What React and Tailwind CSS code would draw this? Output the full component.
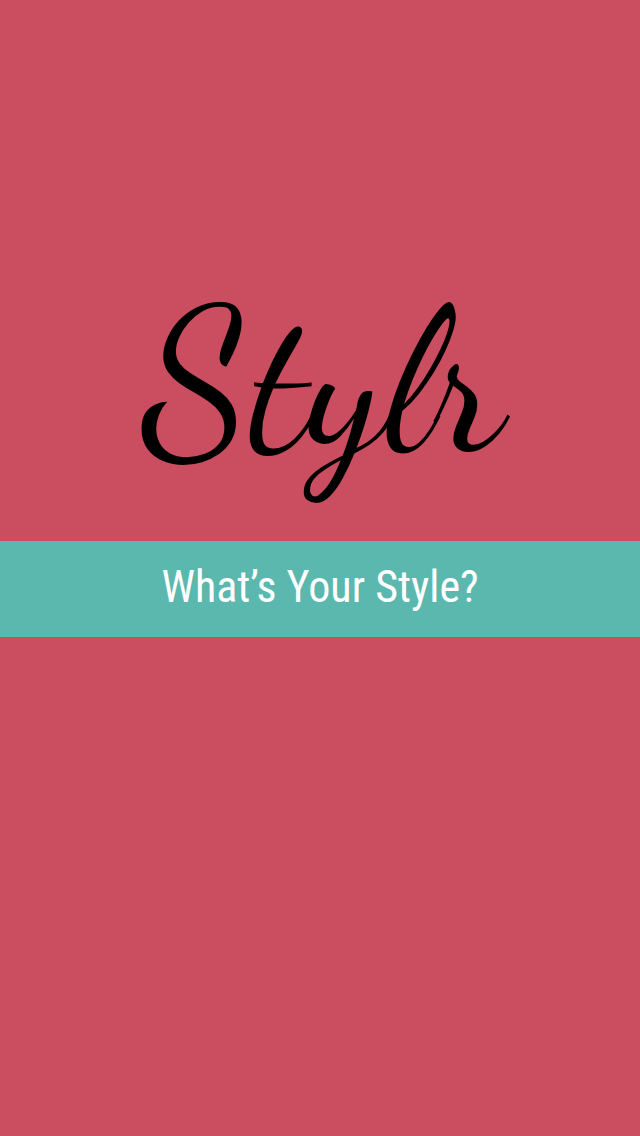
export default function App() {
  return (
    <main className="flex min-h-screen flex-col bg-[#ca4e5f]">
      <header className="flex justify-center pt-[283px] pb-[58px] pl-1.5">
        <h1 className="font-['Dancing_Script',cursive] text-[201px] leading-[200px] text-black">
          Stylr
        </h1>
      </header>
      <section className="flex h-24 items-center justify-center bg-[#5ab8ae] pb-1">
        <p className="font-['Roboto_Condensed',Roboto,sans-serif] text-[44px] leading-none text-white">
          What’s Your Style?
        </p>
      </section>
    </main>
  );
}
